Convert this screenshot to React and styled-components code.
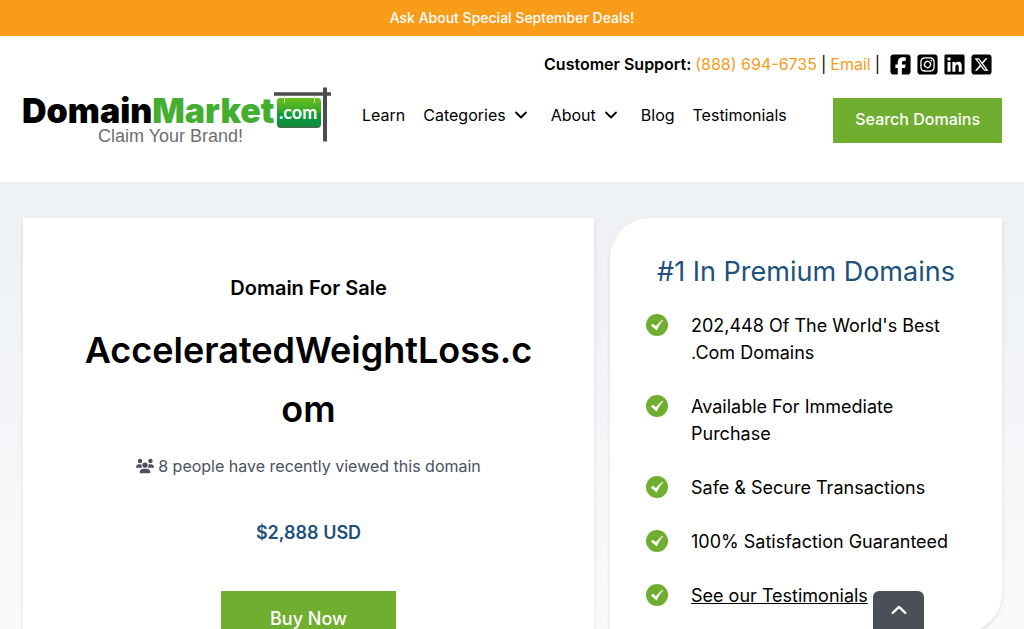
import React from "react";
import styled, { createGlobalStyle } from "styled-components";
import {
  FaSquareFacebook,
  FaSquareInstagram,
  FaLinkedin,
  FaSquareXTwitter,
  FaUsers,
} from "react-icons/fa6";

const GlobalStyle = createGlobalStyle`
  * {
    box-sizing: border-box;
  }
  body {
    margin: 0;
    background: #f8f9fb;
    color: #000;
    font-family: Inter, sans-serif;
    font-size: 16px;
    line-height: 24px;
  }
  a {
    color: inherit;
    text-decoration: none;
  }
`;

const Page = styled.div`
  height: 100vh;
  overflow: hidden;
`;

const Banner = styled.div`
  background: #f89c1a;
  color: #fff;
  padding: 6px 16px;
  text-align: center;
  font-size: 14px;
  font-weight: 500;
`;

const Header = styled.header`
  background: #fff;
  padding: 16px 22px 36px;
`;

const SupportBar = styled.div`
  display: flex;
  justify-content: flex-end;
  align-items: center;
  gap: 4px;
  height: 24px;
  padding-right: 9px;
`;

const SupportLabel = styled.span`
  font-weight: 600;
`;

const OrangeLink = styled.a`
  color: #f89c1a;
`;

const Socials = styled.div`
  display: flex;
  gap: 4px;
  margin-left: 5px;

  a {
    display: flex;
  }
`;

const NavBar = styled.div`
  display: flex;
  align-items: center;
  margin-top: 8px;
`;

const LogoLink = styled.a`
  display: block;
  flex: none;
  height: 62px;
`;

const Nav = styled.nav`
  display: flex;
  flex: 1;
  gap: 18px;
  margin-left: 30px;
`;

const NavLink = styled.a`
  display: flex;
  align-items: center;
  gap: 8px;
  padding-right: ${(props) => (props.$menu ? "5px" : "0")};
`;

const Cta = styled.div`
  padding-top: 10px;
`;

const GreenButton = styled.button`
  display: block;
  border: 0;
  background: #70ae30;
  color: #fff;
  font-family: inherit;
  font-weight: 500;
  font-size: ${(props) => (props.$large ? "18px" : "16px")};
  line-height: 24px;
  padding: ${(props) => (props.$large ? "16px 49px" : "9px 22px 12px")};
  cursor: pointer;
`;

const Main = styled.main`
  display: grid;
  grid-template-columns: minmax(0, 571fr) minmax(0, 392fr);
  gap: 16px;
  align-items: start;
  padding: 36px 22px 60px 23px;
  background: linear-gradient(#edf1f4, #f9fafb 460px);
`;

const Card = styled.section`
  background: #fff;
  box-shadow: 0 2px 4px rgba(0, 0, 0, 0.1);
`;

const SaleCard = styled(Card)`
  display: flex;
  flex-direction: column;
  align-items: center;
  padding: 56px 60px;
  text-align: center;
`;

const SaleLabel = styled.h2`
  margin: 0;
  font-size: 20px;
  line-height: 28px;
  font-weight: 600;
`;

const DomainName = styled.h1`
  margin: 19px 0 0;
  width: 100%;
  font-size: 36px;
  line-height: 59px;
  font-weight: 600;
  word-break: break-all;
`;

const Viewers = styled.p`
  display: flex;
  align-items: center;
  gap: 4px;
  margin: 15px 0 0;
  color: #4b5160;
`;

const Price = styled.p`
  margin: 41px 0 44px;
  color: #20507c;
  font-size: 18px;
  line-height: 28px;
  font-weight: 600;
`;

const PremiumCard = styled(Card)`
  padding: 36px 36px 24px;
  border-radius: 40px 0 40px 0;
`;

const PremiumTitle = styled.h2`
  margin: 0 0 22px;
  color: #20507c;
  font-size: 27px;
  line-height: 36px;
  font-weight: 400;
  text-align: center;
`;

const Features = styled.ul`
  display: flex;
  flex-direction: column;
  gap: 27px;
  margin: 0;
  padding: 0;
  list-style: none;
`;

const Feature = styled.li`
  display: flex;
  align-items: flex-start;
  gap: 23px;
  font-size: 18px;
  line-height: 27px;

  svg {
    flex: none;
    margin-top: 2px;
  }
  a {
    text-decoration: underline;
  }
`;

const ToTop = styled.button`
  position: fixed;
  right: 100px;
  bottom: 0;
  display: flex;
  justify-content: center;
  width: 51px;
  height: 38px;
  padding: 14px 0 0;
  border: 0;
  border-radius: 6px 6px 0 0;
  background: #4b4f58;
  cursor: pointer;
`;

const Logo = () => (
  <svg width="310" height="62" viewBox="22 84 310 62" role="img" aria-label="DomainMarket.com">
    <defs>
      <linearGradient id="sign" x1="0" y1="0" x2="0" y2="1">
        <stop offset="0" stopColor="#6cc01a" />
        <stop offset="0.5" stopColor="#2fa62c" />
        <stop offset="0.55" stopColor="#0f9a3a" />
        <stop offset="1" stopColor="#0a8f3c" />
      </linearGradient>
    </defs>
    <text x="22" y="123" fontFamily="Inter, sans-serif" fontWeight="900" fontSize="34" fill="#000">
      Domain<tspan fill="#43ae2f">Market</tspan>
    </text>
    <text x="98" y="142" fontFamily="Liberation Sans, sans-serif" fontSize="18" fill="#6d6e71">
      Claim Your Brand!
    </text>
    <rect x="277" y="99" width="44" height="29" rx="4" fill="#3f6f4a" />
    <rect x="277" y="98" width="44" height="28" rx="3" fill="url(#sign)" />
    <path d="M284.500 96v7M314.500 96v7" stroke="#cdd2cf" strokeWidth="1" />
    <text x="279" y="119" fontFamily="Lato, sans-serif" fontWeight="700" fontSize="18" fill="#fff">
      .com
    </text>
    <path d="M274 94h57" stroke="#4d4d4f" strokeWidth="3.500" />
    <path d="M325 87.500v54" stroke="#4d4d4f" strokeWidth="4" />
  </svg>
);

const Chevron = ({ up }) => (
  <svg
    width={up ? 16 : 14}
    height={up ? 10 : 8}
    viewBox="0 0 14 8"
    fill="none"
    stroke={up ? "#fff" : "#000"}
    strokeWidth={up ? 2 : 1.8}
    strokeLinecap="round"
    strokeLinejoin="round"
    aria-hidden="true"
  >
    <path d={up ? "M1.500 6.500l5.500-5.200 5.500 5.200" : "M2 1.500l5 5 5-5"} />
  </svg>
);

const Check = () => (
  <svg width="22" height="22" viewBox="0 0 22 22" aria-hidden="true">
    <circle cx="11" cy="11" r="11" fill="#70ae30" />
    <path d="M4.800 11.400l2.400-1.600 2.700 2.500c1.900-2.700 4.200-5 7-6.600l.5.500c-3 3-5 6.200-6.700 10.300z" fill="#fff" />
  </svg>
);

const navItems = [
  { label: "Learn" },
  { label: "Categories", menu: true },
  { label: "About", menu: true },
  { label: "Blog" },
  { label: "Testimonials" },
];

const socials = [
  { label: "Facebook", Icon: FaSquareFacebook },
  { label: "Instagram", Icon: FaSquareInstagram },
  { label: "LinkedIn", Icon: FaLinkedin },
  { label: "X", Icon: FaSquareXTwitter },
];

const features = [
  "202,448 Of The World's Best .Com Domains",
  "Available For Immediate Purchase",
  "Safe & Secure Transactions",
  "100% Satisfaction Guaranteed",
];

function App() {
  return (
    <Page>
      <GlobalStyle />
      <Banner>Ask About Special September Deals!</Banner>
      <Header>
        <SupportBar>
          <SupportLabel>Customer Support:</SupportLabel>
          <OrangeLink href="tel:8886946735">(888) 694-6735</OrangeLink>
          <span>|</span>
          <OrangeLink href="#email">Email</OrangeLink>
          <span>|</span>
          <Socials>
            {socials.map(({ label, Icon }) => (
              <a key={label} href="#social" aria-label={label}>
                <Icon size={23} />
              </a>
            ))}
          </Socials>
        </SupportBar>
        <NavBar>
          <LogoLink href="#home">
            <Logo />
          </LogoLink>
          <Nav>
            {navItems.map((item) => (
              <NavLink key={item.label} href="#nav" $menu={item.menu}>
                {item.label}
                {item.menu && <Chevron />}
              </NavLink>
            ))}
          </Nav>
          <Cta>
            <GreenButton>Search Domains</GreenButton>
          </Cta>
        </NavBar>
      </Header>
      <Main>
        <SaleCard>
          <SaleLabel>Domain For Sale</SaleLabel>
          <DomainName>AcceleratedWeightLoss.com</DomainName>
          <Viewers>
            <FaUsers size={18} />8 people have recently viewed this domain
          </Viewers>
          <Price>$2,888 USD</Price>
          <GreenButton $large>Buy Now</GreenButton>
        </SaleCard>
        <PremiumCard>
          <PremiumTitle>#1 In Premium Domains</PremiumTitle>
          <Features>
            {features.map((text) => (
              <Feature key={text}>
                <Check />
                <span>{text}</span>
              </Feature>
            ))}
            <Feature>
              <Check />
              <a href="#testimonials">See our Testimonials</a>
            </Feature>
          </Features>
        </PremiumCard>
      </Main>
      <ToTop aria-label="Scroll to top">
        <Chevron up />
      </ToTop>
    </Page>
  );
}

export default App;
